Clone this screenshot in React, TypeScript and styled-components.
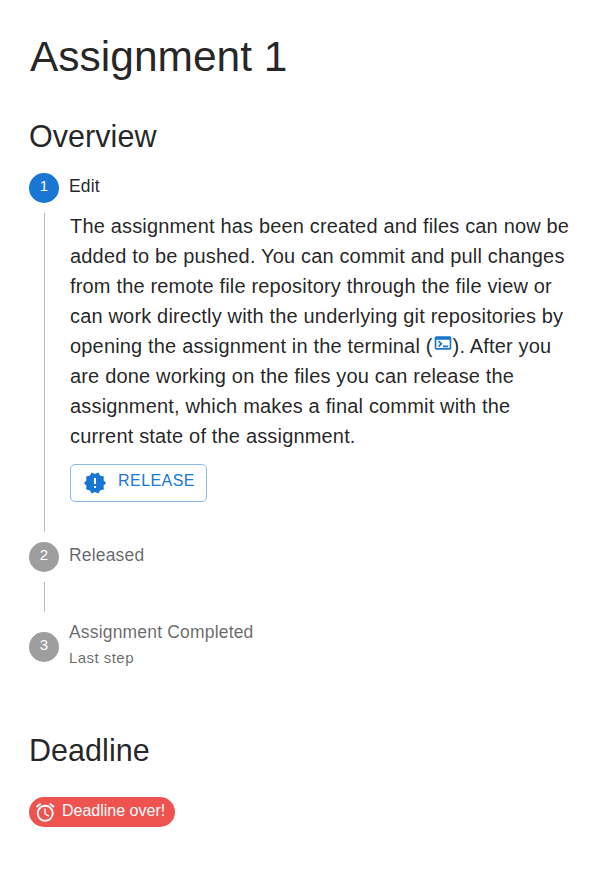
import React from 'react';
import styled, { createGlobalStyle } from 'styled-components';
import { MdNewReleases, MdAccessAlarm, MdTerminal } from 'react-icons/md';

const Global = createGlobalStyle`
  body { margin: 0; background: #fff; color: rgba(0,0,0,.87); font-family: "Nimbus Sans", "Liberation Sans", Arial, Helvetica, sans-serif; }
  * { box-sizing: border-box; }
`;
const Page = styled.main`padding: 31px 29px 0; height: 891px;`;
const Title = styled.h1`margin: 0 0 35px; padding-left: 1px; font-size: 42.5px; line-height: 52px; font-weight: 400;`;
const Heading = styled.h2<{ $top?: number }>`
  margin: ${p => p.$top ?? 0}px 0 0; font-size: 30.5px; line-height: 37px; font-weight: 400; letter-spacing: .05px;
`;
const Stepper = styled.div`margin-top: 18px; display: flex; flex-direction: column;`;
const StepRow = styled.div<{ $height?: number }>`display: flex; align-items: center; height: ${p => p.$height ?? 30}px;`;
const Circle = styled.span<{ $active?: boolean }>`
  width: 30px; height: 30px; margin-right: 10px; border-radius: 50%; color: #fff;
  background: ${p => p.$active ? '#1976d2' : '#9e9e9e'}; font-size: 15px; line-height: 26px; text-align: center;
`;
const StepText = styled.div<{ $active?: boolean }>`
  font-size: 17.5px; line-height: 25px; letter-spacing: .18px; padding-bottom: 4px;
  color: ${p => p.$active ? 'rgba(0,0,0,.87)' : 'rgba(0,0,0,.6)'};
`;
const Caption = styled.div`font-size: 15px; line-height: 25px; letter-spacing: .45px;`;
const Content = styled.div<{ $height: number }>`
  margin: 10px 0 10px 15px; padding-left: 25px; border-left: 1px solid #bdbdbd; height: ${p => p.$height}px;
`;
const Body = styled.p`margin: -2px 0 0; font-size: 20px; line-height: 30px; letter-spacing: .17px; white-space: nowrap;`;
const TerminalIcon = styled(MdTerminal)`width: 20px; height: 20px; color: #1976d2;`;
const Release = styled.button`
  margin-top: 13px; display: flex; align-items: center; width: 137px; height: 38px; padding: 0 11px 1px 12px;
  border: 1px solid rgba(25,118,210,.5); border-radius: 5px; background: transparent; color: #1976d2;
  font: 400 16px "Nimbus Sans", "Liberation Sans", sans-serif; letter-spacing: .45px;
  svg { width: 24px; height: 24px; margin-right: 11px; flex: none; }
`;
const Chip = styled.div`
  display: flex; align-items: center; width: 146px; height: 30px; margin-top: 28px; border-radius: 15px;
  background: #ef5350; color: #fff; font-size: 16px; padding-left: 5px;
  svg { width: 22.5px; height: 22.5px; margin-right: 5.5px; flex: none; }
`;
const Label = styled.span`padding-bottom: 3px;`;

export default function App() {
  return <><Global /><Page>
    <Title>Assignment 1</Title>
    <Heading>Overview</Heading>
    <Stepper>
      <StepRow><Circle $active>1</Circle><StepText $active>Edit</StepText></StepRow>
      <Content $height={319}>
        <Body>
          The assignment has been created and files can now be<br />
          added to be pushed. You can commit and pull changes<br />
          from the remote file repository through the file view or<br />
          can work directly with the underlying git repositories by<br />
          opening the assignment in the terminal (<TerminalIcon />). After you<br />
          are done working on the files you can release the<br />
          assignment, which makes a final commit with the<br />
          current state of the assignment.
        </Body>
        <Release><MdNewReleases /><Label>RELEASE</Label></Release>
      </Content>
      <StepRow><Circle>2</Circle><StepText>Released</StepText></StepRow>
      <Content $height={30} />
      <StepRow $height={50}><Circle>3</Circle><StepText>Assignment Completed<Caption>Last step</Caption></StepText></StepRow>
    </Stepper>
    <Heading $top={60}>Deadline</Heading>
    <Chip><MdAccessAlarm /><Label>Deadline over!</Label></Chip>
  </Page></>;
}
